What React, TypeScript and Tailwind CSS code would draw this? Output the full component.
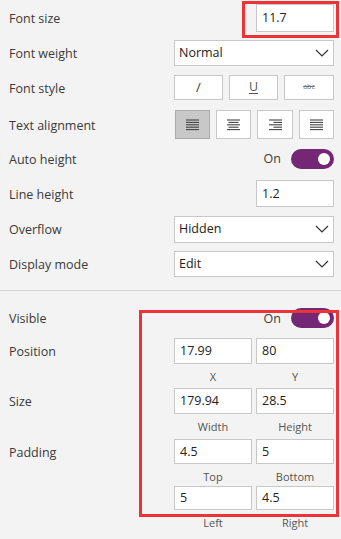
import React from "react";

const font = { fontFamily: '"Open Sans", "Noto Sans", sans-serif' };

function Chevron() {
  return (
    <svg width="14" height="8" viewBox="0 0 14 8" className="absolute right-[4px] top-1/2 -translate-y-1/2">
      <path d="M1 1 L7 7 L13 1" fill="none" stroke="#333" strokeWidth="1.2" />
    </svg>
  );
}

function Select({ value, h }: { value: string; h: string }) {
  return (
    <div className={`relative w-[160px] ${h} bg-white border border-[#c8c8c8] flex items-center pl-[4px] pt-[1px] text-[12.5px] text-[#222]`}>
      {value}
      <Chevron />
    </div>
  );
}

function Input({ value, h, w = "w-[78px]" }: { value: string; h: string; w?: string }) {
  return (
    <div className={`${w} ${h} bg-white border border-[#c8c8c8] flex items-center pl-[5px] pt-[1px] text-[12.5px] text-[#222]`}>
      {value}
    </div>
  );
}

function Toggle() {
  return (
    <div className="flex items-center gap-[10px]">
      <span className="text-[12.5px] text-[#3a3a3a] pt-[2px]">On</span>
      <div className="w-[43px] h-[20px] rounded-full bg-[#742774] flex items-center justify-end pr-[4px]">
        <div className="w-[12px] h-[12px] rounded-full bg-white" />
      </div>
    </div>
  );
}

function AlignIcon({ kind }: { kind: "left" | "center" | "right" | "justify" }) {
  const rows = [0, 1, 2, 3, 4];
  const lines = rows.map((i) => {
    const y = 1 + i * 2.4;
    let x1 = 0;
    let x2 = 13;
    if (kind === "center" && (i === 1 || i === 3)) {
      x1 = 1.5;
      x2 = 11.5;
    }
    if (kind === "right" && (i === 1 || i === 3)) {
      x1 = 4.5;
    }
    return <line key={i} x1={x1} x2={x2} y1={y} y2={y} stroke="#444" strokeWidth="1.1" />;
  });
  return (
    <svg width="13" height="12" viewBox="0 0 13 12">
      {lines}
    </svg>
  );
}

function Row({ label, h, children }: { label: string; h: string; children: React.ReactNode }) {
  return (
    <div className={`flex items-center justify-between ${h} pl-[9px] pr-[7px]`}>
      <span className="text-[12.5px] text-[#3a3a3a] pt-[3px]">{label}</span>
      {children}
    </div>
  );
}

function Caption({ a, b }: { a: string; b: string }) {
  return (
    <div className="flex justify-end pr-[7px] gap-[4px] pt-[2px]">
      <div className="w-[78px] text-center text-[11px] text-[#555] leading-[22px]">{a}</div>
      <div className="w-[78px] text-center text-[11px] text-[#555] leading-[22px]">{b}</div>
    </div>
  );
}

function PairRow({ label, a, b, h }: { label?: string; a: string; b: string; h: string }) {
  return (
    <div className={`flex items-center justify-between pl-[9px] pr-[7px] ${h}`}>
      <span className="text-[12.5px] text-[#3a3a3a] pt-[3px]">{label ?? ""}</span>
      <div className="flex gap-[4px]">
        <Input value={a} h={h} />
        <Input value={b} h={h} />
      </div>
    </div>
  );
}

export default function App() {
  return (
    <div className="relative w-[341px] h-[539px] bg-[#f3f3f3] overflow-hidden" style={font}>
      <Row label="Font size" h="h-[36px]">
        <Input value="11.7" h="h-[28px]" />
      </Row>
      <Row label="Font weight" h="h-[34px]">
        <Select value="Normal" h="h-[26px]" />
      </Row>
      <Row label="Font style" h="h-[35px]">
        <div className="flex gap-[6px]">
          <div className="w-[49px] h-[25px] bg-white border border-[#c8c8c8] flex items-center justify-center text-[13px] text-[#333]">/</div>
          <div className="w-[49px] h-[25px] bg-white border border-[#c8c8c8] flex items-center justify-center text-[12.5px] text-[#555] underline underline-offset-[2px]">U</div>
          <div className="w-[50px] h-[25px] bg-white border border-[#c8c8c8] flex items-center justify-center text-[7px] text-[#777] line-through">abc</div>
        </div>
      </Row>
      <Row label="Text alignment" h="h-[39px]">
        <div className="flex gap-[6px]">
          <div className="w-[35px] h-[29px] bg-[#c8c8c8] border border-[#aaaaaa] flex items-center justify-center">
            <AlignIcon kind="left" />
          </div>
          <div className="w-[35px] h-[29px] bg-white border border-[#c8c8c8] flex items-center justify-center">
            <AlignIcon kind="center" />
          </div>
          <div className="w-[36px] h-[29px] bg-white border border-[#c8c8c8] flex items-center justify-center">
            <AlignIcon kind="right" />
          </div>
          <div className="w-[35px] h-[29px] bg-white border border-[#c8c8c8] flex items-center justify-center">
            <AlignIcon kind="justify" />
          </div>
        </div>
      </Row>
      <Row label="Auto height" h="h-[29px]">
        <Toggle />
      </Row>
      <Row label="Line height" h="h-[41px]">
        <Input value="1.2" h="h-[27px]" />
      </Row>
      <Row label="Overflow" h="h-[30px]">
        <Select value="Hidden" h="h-[27px]" />
      </Row>
      <Row label="Display mode" h="h-[40px]">
        <Select value="Edit" h="h-[26px]" />
      </Row>
      <div className="mt-[6px] h-px bg-[#d2d2d2]" />
      <div className="mt-[7px]">
        <Row label="Visible" h="h-[40px]">
          <Toggle />
        </Row>
        <PairRow label="Position" a="17.99" b="80" h="h-[26px]" />
        <div className="h-[24px]">
          <Caption a="X" b="Y" />
        </div>
        <PairRow label="Size" a="179.94" b="28.5" h="h-[26px]" />
        <div className="h-[25px]">
          <Caption a="Width" b="Height" />
        </div>
        <PairRow label="Padding" a="4.5" b="5" h="h-[25px]" />
        <div className="h-[22px]">
          <Caption a="Top" b="Bottom" />
        </div>
        <PairRow a="5" b="4.5" h="h-[24px]" />
        <div className="h-[24px]">
          <Caption a="Left" b="Right" />
        </div>
      </div>
      <div className="absolute left-[242px] top-[1px] w-[97px] h-[37px] border-[3px] border-[#ee3338]" />
      <div className="absolute left-[139px] top-[310px] w-[200px] h-[207px] border-[3px] border-[#ee3338]" />
    </div>
  );
}
